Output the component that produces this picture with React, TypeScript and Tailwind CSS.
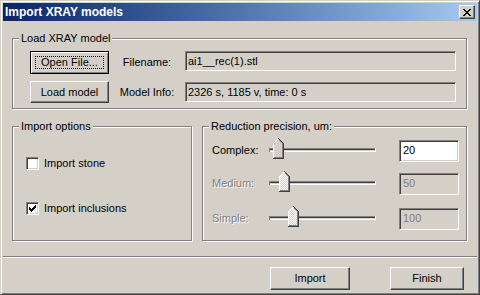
import React from 'react';

const raised =
  'border border-t-white border-l-white border-r-[#404040] border-b-[#404040] shadow-[inset_-1px_-1px_0_#808080]';
const sunken =
  'border border-t-[#808080] border-l-[#808080] border-r-white border-b-white shadow-[inset_1px_1px_0_#404040,inset_-1px_-1px_0_#d4d0c8]';
const disabledText = 'text-[#808080] [text-shadow:1px_1px_0_#fff]';

function GroupBox({ label, className, children }: { label: string; className: string; children: React.ReactNode }) {
  return (
    <div className={`relative border border-[#808080] shadow-[inset_1px_1px_0_#fff,1px_1px_0_#fff] ${className}`}>
      <span className="absolute -top-[7px] left-[6px] bg-[#d4d0c8] px-[2px] leading-[13px]">{label}</span>
      {children}
    </div>
  );
}

function Button({ label, className, isDefault }: { label: string; className: string; isDefault?: boolean }) {
  if (isDefault) {
    return (
      <div
        className={`relative flex items-center justify-center border border-black shadow-[inset_1px_1px_0_#fff,inset_-1px_-1px_0_#808080] ${className}`}
      >
        <span className="absolute inset-[4px] border border-dotted border-black" />
        <span className="leading-[13px]">{label}</span>
      </div>
    );
  }
  return (
    <div className={`flex items-center justify-center ${raised} ${className}`}>
      <span className="leading-[13px]">{label}</span>
    </div>
  );
}

function Checkbox({ checked, label }: { checked: boolean; label: string }) {
  const cells = [
    [2, 4], [3, 5], [4, 6], [5, 5], [6, 4], [7, 3], [8, 2],
  ];
  return (
    <div className="flex h-[13px] items-center">
      <div className={`h-[13px] w-[13px] bg-white ${sunken}`}>
        {checked && (
          <svg width="11" height="11" viewBox="0 0 11 11" className="block">
            {cells.map(([x, y]) => (
              <rect key={x} x={x} y={y} width="1" height="3" fill="#000" />
            ))}
          </svg>
        )}
      </div>
      <span className="ml-[5px] leading-[13px]">{label}</span>
    </div>
  );
}

function Thumb({ x, disabled }: { x: number; disabled?: boolean }) {
  return (
    <g transform={`translate(${x},0)`}>
      <path d="M0 5 L5 0 L10 5 L10 20 L0 20 Z" fill={disabled ? 'url(#dither)' : '#d4d0c8'} />
      <path d="M0.5 20 L0.5 5.5 L5.5 0.5" stroke="#fff" fill="none" />
      <path d="M5.5 0.5 L10.5 5.5 L10.5 20.5 L0 20.5" stroke="#404040" fill="none" />
      <path d="M5.5 1.8 L9.5 5.8 L9.5 19.5 L1 19.5" stroke="#808080" fill="none" />
    </g>
  );
}

function Slider({ pos, disabled }: { pos: number; disabled?: boolean }) {
  return (
    <svg width="107" height="25" viewBox="0 0 107 25" className="block shrink-0" shapeRendering="crispEdges">
      <defs>
        <pattern id="dither" width="2" height="2" patternUnits="userSpaceOnUse">
          <rect width="2" height="2" fill="#d4d0c8" />
          <rect width="1" height="1" fill="#fff" />
          <rect x="1" y="1" width="1" height="1" fill="#fff" />
        </pattern>
      </defs>
      <rect x="0" y="10" width="107" height="1" fill="#808080" />
      <rect x="0" y="11" width="106" height="1" fill="#404040" />
      <rect x="0" y="13" width="107" height="1" fill="#fff" />
      <rect x="0" y="10" width="1" height="4" fill="#808080" />
      <rect x="106" y="10" width="1" height="4" fill="#fff" />
      <Thumb x={pos} disabled={disabled} />
    </svg>
  );
}

function PrecisionRow({ label, value, pos, disabled }: { label: string; value: string; pos: number; disabled?: boolean }) {
  return (
    <div className="flex h-[23px] items-center">
      <span className={`w-[57px] leading-[13px] ${disabled ? disabledText : ''}`}>{label}</span>
      <Slider pos={pos} disabled={disabled} />
      <div
        className={`ml-[23px] flex h-[22px] w-[60px] items-center pl-[3px] ${sunken} ${
          disabled ? 'bg-[#d4d0c8] text-[#808080]' : 'bg-white'
        }`}
      >
        <span className="leading-[13px]">{value}</span>
      </div>
    </div>
  );
}

export default function App() {
  return (
    <div className="h-[295px] w-[480px] bg-[#d4d0c8] p-[2px] font-['Liberation_Sans',Arial,sans-serif] text-[11px] text-black border border-t-[#d4d0c8] border-l-[#d4d0c8] border-r-[#404040] border-b-[#404040] shadow-[inset_1px_1px_0_#fff,inset_-1px_-1px_0_#808080]">
      <div className="flex h-[18px] items-center justify-between bg-linear-to-r from-[#0a246a] to-[#a6caf0] pl-[2px] pr-[2px]">
        <span className="text-[12px] font-bold leading-[14px] text-white">Import XRAY models</span>
        <div className={`flex h-[14px] w-[16px] items-center justify-center bg-[#d4d0c8] ${raised}`}>
          <svg width="8" height="7" viewBox="0 0 8 7" className="block" shapeRendering="crispEdges">
            <path d="M0 0h2v1h-2zM6 0h2v1h-2zM1 1h2v1h-2zM5 1h2v1h-2zM2 2h4v1h-4zM3 3h2v1h-2zM2 4h4v1h-4zM1 5h2v1h-2zM5 5h2v1h-2zM0 6h2v1h-2zM6 6h2v1h-2z" fill="#000" />
          </svg>
        </div>
      </div>

      <div className="pl-[9px] pt-[17px]">
        <GroupBox label="Load XRAY model" className="h-[71px] w-[455px] pl-[17px] pt-[12px]">
          <div className="flex h-[23px] items-start">
            <Button label="Open File..." className="h-[23px] w-[79px]" isDefault />
            <span className="w-[76px] self-center text-center leading-[13px]">Filename:</span>
            <div className={`flex h-[20px] w-[271px] items-center bg-[#d4d0c8] pl-[2px] ${sunken}`}>
              <span className="leading-[13px]">ai1__rec(1).stl</span>
            </div>
          </div>
          <div className="mt-[7px] flex h-[23px] items-start">
            <Button label="Load model" className="h-[22px] w-[79px]" />
            <span className="w-[76px] self-center text-center leading-[13px]">Model Info:</span>
            <div className={`mt-[1px] flex h-[20px] w-[271px] items-center bg-[#d4d0c8] pl-[2px] ${sunken}`}>
              <span className="leading-[13px]">2326 s, 1185 v, time: 0 s</span>
            </div>
          </div>
        </GroupBox>

        <div className="mt-[17px] flex gap-[10px]">
          <GroupBox label="Import options" className="h-[115px] w-[180px] pl-[13px] pt-[30px]">
            <Checkbox checked={false} label="Import stone" />
            <div className="mt-[32px]">
              <Checkbox checked label="Import inclusions" />
            </div>
          </GroupBox>
          <GroupBox label="Reduction precision, um:" className="h-[115px] w-[265px] pl-[9px] pt-[12px]">
            <PrecisionRow label="Complex:" value="20" pos={4} />
            <div className="mt-[10px]">
              <PrecisionRow label="Medium:" value="50" pos={10} disabled />
            </div>
            <div className="mt-[12px]">
              <PrecisionRow label="Simple:" value="100" pos={19} disabled />
            </div>
          </GroupBox>
        </div>
      </div>

      <div className="mt-[15px] h-[2px] border-t border-b border-t-[#808080] border-b-white" />

      <div className="mt-[9px] flex justify-end gap-[40px] pr-[13px]">
        <Button label="Import" className="h-[23px] w-[80px]" />
        <Button label="Finish" className="h-[23px] w-[74px]" />
      </div>
    </div>
  );
}
